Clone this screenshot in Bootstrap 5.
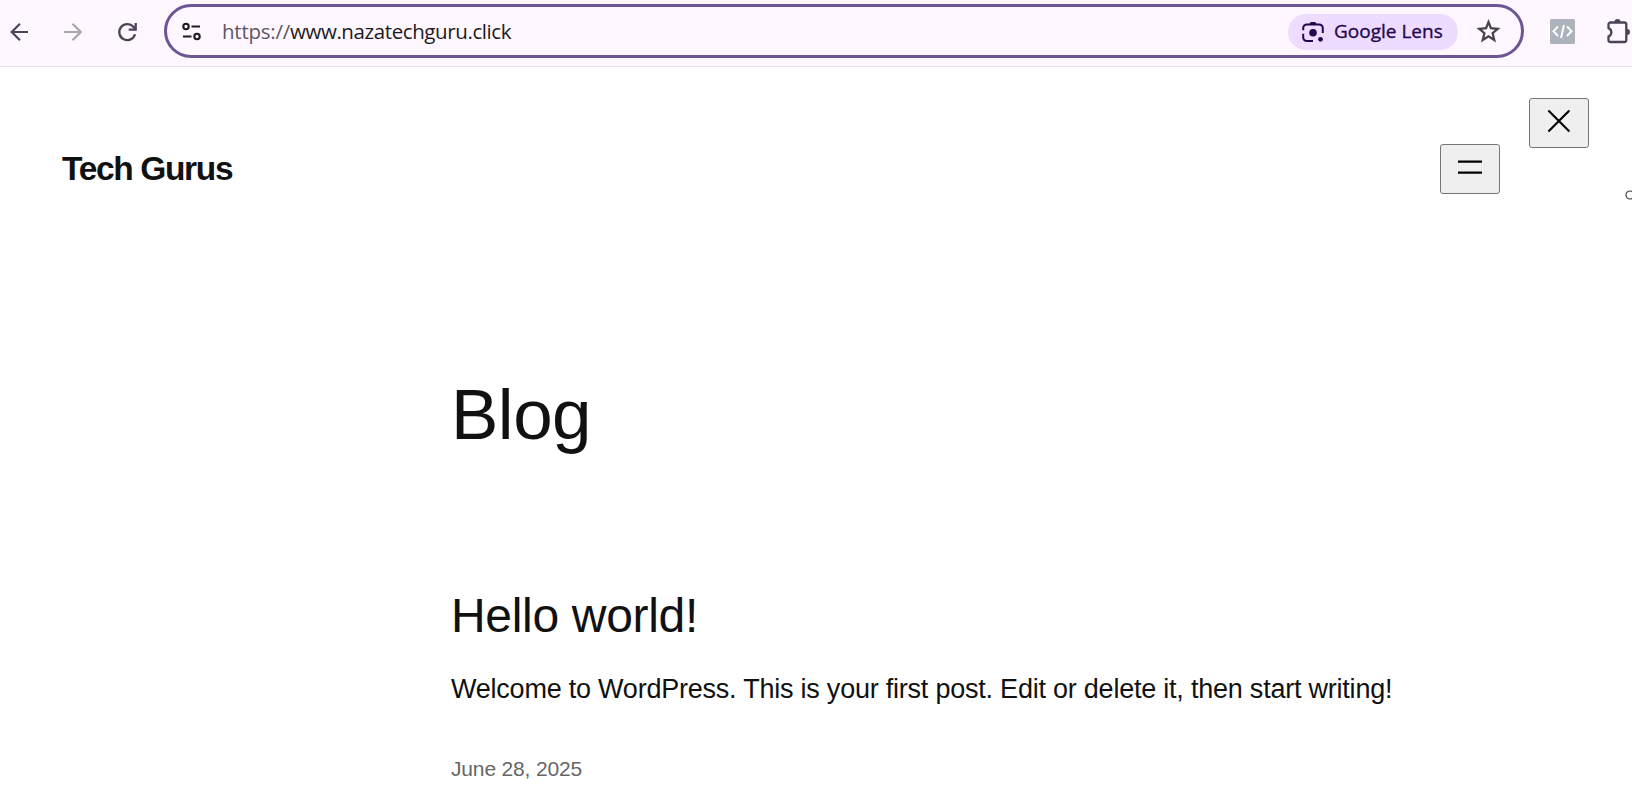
<!DOCTYPE html>
<html lang="en">
<head>
<meta charset="utf-8">
<meta name="viewport" content="width=device-width, initial-scale=1">
<title>Tech Gurus</title>
<link href="https://cdn.jsdelivr.net/npm/bootstrap@5.3.0/dist/css/bootstrap.min.css" rel="stylesheet">
<style>
body{font-family:"Liberation Sans",Arial,sans-serif;color:#111;background:#fff;height:808px;overflow:hidden}
svg{display:block;flex:none}
.toolbar{height:67px;background:#fef7ff;border-bottom:1px solid #eadcf3;padding-left:7px;color:#4a4458;font-family:"Open Sans","Noto Sans",sans-serif}
.nav-icons{width:157px;gap:29px;height:63px}
.omnibox{width:1360px;height:54px;margin-top:4px;border:3px solid #6e5494;padding:0 19px 0 14px}
.url{font-size:20.5px;line-height:28px;color:#1d1b20;margin-left:19px;white-space:nowrap;letter-spacing:-.4px}
.url span{color:#5c5663;letter-spacing:-.25px}
.lens{width:170px;height:36px;background:#eddcff;color:#25074d;padding-left:13px;font-size:19px;gap:9px;white-space:nowrap;-webkit-text-stroke:.35px #25074d;margin-top:1px}
.ext{width:25px;height:25px;margin-left:26px;margin-top:19px}
.puzzle{margin-left:30px;margin-top:17px}
.site-header{height:160px;padding:0 0 0 62px}
.site-title{font-size:33.500px;line-height:40px;font-weight:700;margin-top:82px;white-space:nowrap;letter-spacing:-1.350px}
.menu-btn{width:60px;height:50px;background:#efefef;border:1px solid #767676;border-radius:3px;padding:0}
.open-btn{margin-top:77px}
.close-btn{margin:31px 43px 0 29px}
.content{margin-left:451px}
.blog-title{font-size:71px;line-height:82px;margin:147px 0 0;font-weight:400;letter-spacing:-.5px}
.post-title{font-size:48px;line-height:56px;margin:132px 0 0;font-weight:400;letter-spacing:-.32px}
.post-text{font-size:27px;line-height:38px;margin:26px 0 0;white-space:nowrap;letter-spacing:-.225px}
.post-date{font-size:21px;line-height:30px;margin:46px 0 0;color:#666;letter-spacing:-.16px}
.cursor{left:1625px;top:190px}
</style>
<script src="https://cdn.jsdelivr.net/npm/bootstrap@5.3.0/dist/js/bootstrap.bundle.min.js"></script>
</head>
<body class="position-relative">
<nav class="toolbar d-flex align-items-start overflow-hidden" aria-label="Browser">
  <div class="nav-icons d-flex align-items-center flex-shrink-0">
    <svg width="25" height="24" viewBox="0 0 25 24" fill="none" stroke="#4a4458" stroke-width="2.2"><path d="M21 12H5M13 3.700L4.700 12l8.300 8.300"/></svg>
    <svg width="25" height="24" viewBox="0 0 25 24" fill="none" stroke="#aaa4ae" stroke-width="2.2"><path d="M3 12h16M11.500 3.700L19.800 12l-8.300 8.300"/></svg>
    <svg width="25" height="24" viewBox="0 0 25 24" fill="none" stroke="#4a4458" stroke-width="2.300"><path d="M20 14.200A8 8 0 1 1 18.300 6.800L20.500 9M20.700 3v6.700h-7"/></svg>
  </div>
  <div class="omnibox d-flex align-items-center rounded-pill flex-shrink-0">
    <svg width="22" height="22" viewBox="0 0 22 22" fill="none" stroke="#1d1b20" stroke-width="2.100"><circle cx="5" cy="6.500" r="2.700"/><path d="M10.500 6.500H19M2 16.500h8.500"/><circle cx="16" cy="16.500" r="2.700"/></svg>
    <div class="url"><span>https://</span>www.nazatechguru.click</div>
    <div class="lens ms-auto rounded-pill d-flex align-items-center">
      <svg width="24" height="24" viewBox="0 0 24 24" fill="none" stroke="#25074d" stroke-width="2"><path d="M2.200 10.300V8a3.600 3.600 0 0 1 3.600-3.600h12.400A3.600 3.600 0 0 1 21.800 8v5M2.200 13.800v3.700a3.600 3.600 0 0 0 3.600 3.600H12"/><path d="M8.500 4.500l1.300-2h4.400l1.300 2z" fill="#25074d" stroke-width="1"/><circle cx="12" cy="12.800" r="3.800" fill="#25074d" stroke="none"/><circle cx="19.500" cy="19.300" r="2.400" fill="#25074d" stroke="none"/></svg>
      <span>Google Lens</span>
    </div>
    <svg class="ms-3" width="28" height="26" viewBox="0 0 28 26" fill="none" stroke="#46434a" stroke-width="2.200"><path d="M14.500 4l2.400 6.200 6.900.6-5.200 4.400 1.700 6.800-5.800-3.700L8.700 22l1.700-6.800-5.200-4.400 6.900-.6z"/></svg>
  </div>
  <svg class="ext" viewBox="0 0 25 25"><rect width="25" height="25" rx="1.500" fill="#adb2bc"/><path d="M8 7.500l-4.500 4.700L8 17M17 7.500l4.500 4.700L17 17M14 6l-3 13" fill="none" stroke="#fff" stroke-width="1.900"/></svg>
  <svg class="puzzle" width="28" height="28" viewBox="0 0 28 28"><path d="M5.500 5.500h13.800a2 2 0 0 1 2 2V23a2 2 0 0 1-2 2H5.500a2 2 0 0 1-2-2v-3.400a4.600 4.600 0 0 0 0-8.500V7.500a2 2 0 0 1 2-2z" fill="none" stroke="#4a4458" stroke-width="2.300"/><path d="M9.500 5a3 3 0 0 1 6 0zM22 12a3 3 0 0 1 0 6z" fill="#4a4458"/></svg>
</nav>
<header class="site-header d-flex align-items-start">
  <div class="site-title">Tech Gurus</div>
  <button class="menu-btn open-btn ms-auto d-flex justify-content-center" aria-label="Open menu"><svg width="36" height="44" viewBox="0 0 36 44" stroke="#000" stroke-width="2.250"><path d="M6 16.500h24M6 27.700h24"/></svg></button>
  <button class="menu-btn close-btn d-flex justify-content-center" aria-label="Close menu"><svg width="36" height="44" viewBox="0 0 36 44" stroke="#000" stroke-width="2.100"><path d="M7.400 11.500l21 21M28.400 11.500l-21 21"/></svg></button>
</header>
<main class="content">
  <h1 class="blog-title">Blog</h1>
  <h2 class="post-title">Hello world!</h2>
  <p class="post-text">Welcome to WordPress. This is your first post. Edit or delete it, then start writing!</p>
  <p class="post-date">June 28, 2025</p>
</main>
<svg class="cursor position-absolute" width="7" height="10" viewBox="0 0 7 10" fill="none" stroke="#444" stroke-width="1.200"><circle cx="5" cy="5" r="4"/></svg>
</body>
</html>
